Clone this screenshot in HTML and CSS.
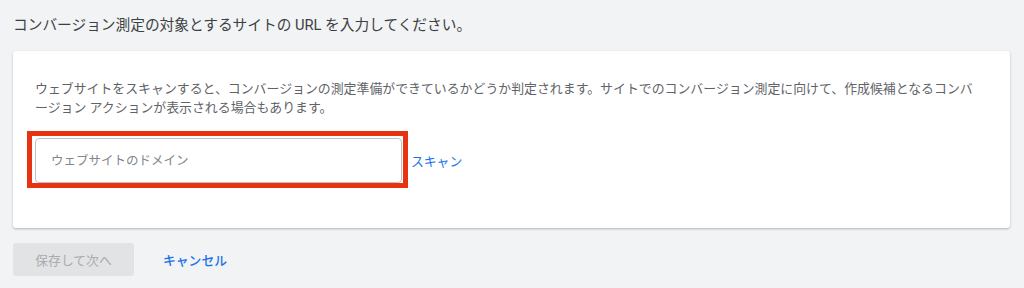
FILE: index.html
```html
<!DOCTYPE html>
<html lang="ja">
<head>
    <meta charset="UTF-8">
    <title>コンバージョン測定</title>
    <link rel="stylesheet" href="styles.css">
</head>
<body>
    <div class="page">
        <h1 class="title">コンバージョン測定の対象とするサイトの URL を入力してください。</h1>

        <div class="card">
            <p class="desc">ウェブサイトをスキャンすると、コンバージョンの測定準備ができているかどうか判定されます。サイトでのコンバージョン測定に向けて、作成候補となるコンバージョン アクションが表示される場合もあります。</p>

            <div class="scan-row">
                <div class="field highlight">
                    <input class="domain" type="text" placeholder="ウェブサイトのドメイン">
                </div>
                <a class="link scan" href="#">スキャン</a>
            </div>
        </div>

        <div class="actions">
            <button class="btn-save" disabled>保存して次へ</button>
            <a class="link cancel" href="#">キャンセル</a>
        </div>
    </div>
</body>
</html>
```

FILE: styles.css
```css
body {
    margin: 0;
    padding: 0;
    background-color: #f1f3f4;
    font-family: Roboto, "Noto Sans CJK JP", sans-serif;
    color: #3c4043;
}

.page {
    padding: 0 14px 0 13px;
}

.title {
    margin: 0;
    padding-top: 15px;
    font-size: 14.7px;
    font-weight: 400;
    line-height: 20px;
    color: #3c4043;
}

.card {
    margin-top: 16px;
    background-color: #fff;
    border-radius: 3px;
    box-shadow: 0 1px 2px rgba(60, 64, 67, 0.25), 0 1px 3px rgba(60, 64, 67, 0.1);
    padding: 28px 27px 45px 22px;
}

.desc {
    margin: 0;
    font-size: 12.9px;
    line-height: 19px;
    color: #5f6368;
}

.scan-row {
    display: flex;
    align-items: center;
    margin-top: 21px;
}

.field {
    position: relative;
    width: 367px;
}

/* roter Markierungsrahmen */
.highlight::after {
    content: "";
    position: absolute;
    top: -7px;
    left: -8px;
    right: -6px;
    bottom: -5px;
    border: 5px solid #e63312;
    pointer-events: none;
}

.domain {
    display: block;
    box-sizing: border-box;
    width: 100%;
    height: 45px;
    padding: 0 15px;
    border: 1px solid #bdc1c6;
    border-radius: 4px;
    font-family: Roboto, "Noto Sans CJK JP", sans-serif;
    font-size: 12.5px;
    color: #3c4043;
    outline: none;
}

.domain::placeholder {
    color: #80868b;
}

.link {
    color: #1a73e8;
    text-decoration: none;
    font-size: 12.8px;
}

.scan {
    margin-left: 9px;
}

.actions {
    display: flex;
    align-items: center;
    margin-top: 15px;
}

.btn-save {
    width: 121px;
    height: 33px;
    border: none;
    border-radius: 3px;
    background-color: #e2e3e5;
    color: #a9abae;
    font-family: Roboto, "Noto Sans CJK JP", sans-serif;
    font-size: 12.8px;
}

.cancel {
    margin-left: 29px;
    font-weight: 500;
}
```
